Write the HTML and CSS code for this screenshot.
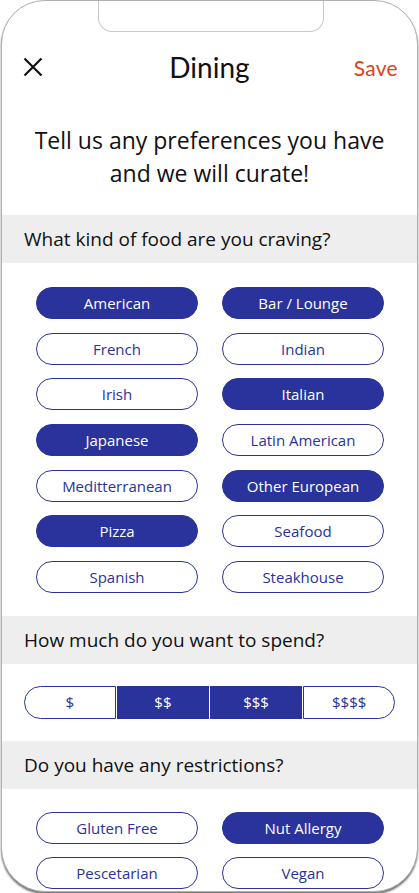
FILE: index.html
```html
<!DOCTYPE html>
<html>
<head>
<meta charset="utf-8">
<link rel="stylesheet" href="styles.css">
</head>
<body>
<div class="phone">
  <div class="notch"></div>
  <header class="topbar">
    <svg class="close" width="20" height="20" viewBox="0 0 20 20"><path d="M1.5 1.5 L18.5 18.5 M18.5 1.5 L1.5 18.5" stroke="#111" stroke-width="2.2" fill="none"/></svg>
    <h1 class="title">Dining</h1>
    <span class="save">Save</span>
  </header>
  <p class="intro">Tell us any preferences you have<br>and we will curate!</p>

  <div class="section-bar">What kind of food are you craving?</div>
  <div class="chips food">
    <span class="chip on">American</span>
    <span class="chip on">Bar / Lounge</span>
    <span class="chip">French</span>
    <span class="chip">Indian</span>
    <span class="chip">Irish</span>
    <span class="chip on">Italian</span>
    <span class="chip on">Japanese</span>
    <span class="chip">Latin American</span>
    <span class="chip">Meditterranean</span>
    <span class="chip on">Other European</span>
    <span class="chip on">Pizza</span>
    <span class="chip">Seafood</span>
    <span class="chip">Spanish</span>
    <span class="chip">Steakhouse</span>
  </div>

  <div class="section-bar">How much do you want to spend?</div>
  <div class="price">
    <span class="seg first">$</span>
    <span class="seg on">$$</span>
    <span class="seg on">$$$</span>
    <span class="seg last">$$$$</span>
  </div>

  <div class="section-bar">Do you have any restrictions?</div>
  <div class="chips restrict">
    <span class="chip">Gluten Free</span>
    <span class="chip on">Nut Allergy</span>
    <span class="chip">Pescetarian</span>
    <span class="chip">Vegan</span>
  </div>
</div>
</body>
</html>
```

FILE: styles.css
```css
* { box-sizing: border-box; }
html, body { margin: 0; padding: 0; background: #fff; }
body { width: 419px; height: 893px; overflow: hidden; }

.phone {
  position: relative;
  margin-left: 1px;
  width: 417px;
  height: 892px;
  border: 1px solid #b0b0b0;
  border-radius: 44px;
  box-shadow: 0 2px 2px rgba(0,0,0,0.55);
  overflow: hidden;
  background: #fff;
  font-family: "Open Sans", "Noto Sans", sans-serif;
}

.notch {
  position: absolute;
  left: 96px;
  top: -2px;
  width: 226px;
  height: 33px;
  border: 1px solid #c8c8c8;
  border-top: none;
  border-radius: 0 0 14px 14px;
}

.topbar {
  margin-top: 46px;
  height: 40px;
  display: flex;
  align-items: center;
  justify-content: space-between;
  padding: 0 19px 0 21px;
  position: relative;
}
.close { display: block; }
.title {
  position: absolute;
  left: 0; right: 0;
  text-align: center;
  margin: 0;
  font-family: Lato, sans-serif;
  font-weight: 400;
  font-size: 28px;
  color: #111;
  pointer-events: none;
}
.save {
  font-family: Lato, sans-serif;
  font-size: 21px;
  color: #e2401b;
  letter-spacing: 0.3px;
}

.intro {
  margin: 37px 0 25px;
  text-align: center;
  font-size: 23px;
  line-height: 33px;
  color: #111;
}

.section-bar {
  height: 48px;
  background: #eeeeee;
  display: flex;
  align-items: center;
  padding-left: 22px;
  font-size: 19px;
  color: #111;
}

.chips {
  display: grid;
  grid-template-columns: 162px 162px;
  column-gap: 24px;
  row-gap: 13.67px;
  padding-left: 34px;
}
.food { margin: 24px 0 23px; }
.restrict { margin-top: 23px; row-gap: 13px; }

.chip {
  height: 32px;
  border: 1px solid #29339b;
  border-radius: 16px;
  color: #29339b;
  font-size: 15px;
  display: flex;
  align-items: center;
  justify-content: center;
  background: #fff;
}
.chip.on { background: #29339b; color: #fff; }

.price {
  display: flex;
  gap: 1.5px;
  margin: 22px 0 22px 22px;
  width: 371px;
  height: 33px;
}
.seg {
  flex: 1;
  border: 1px solid #29339b;
  color: #29339b;
  font-size: 15px;
  display: flex;
  align-items: center;
  justify-content: center;
  background: #fff;
}
.seg.on { background: #29339b; color: #fff; }
.seg.first { border-radius: 17px 0 0 17px; }
.seg.last { border-radius: 0 17px 17px 0; }
```
